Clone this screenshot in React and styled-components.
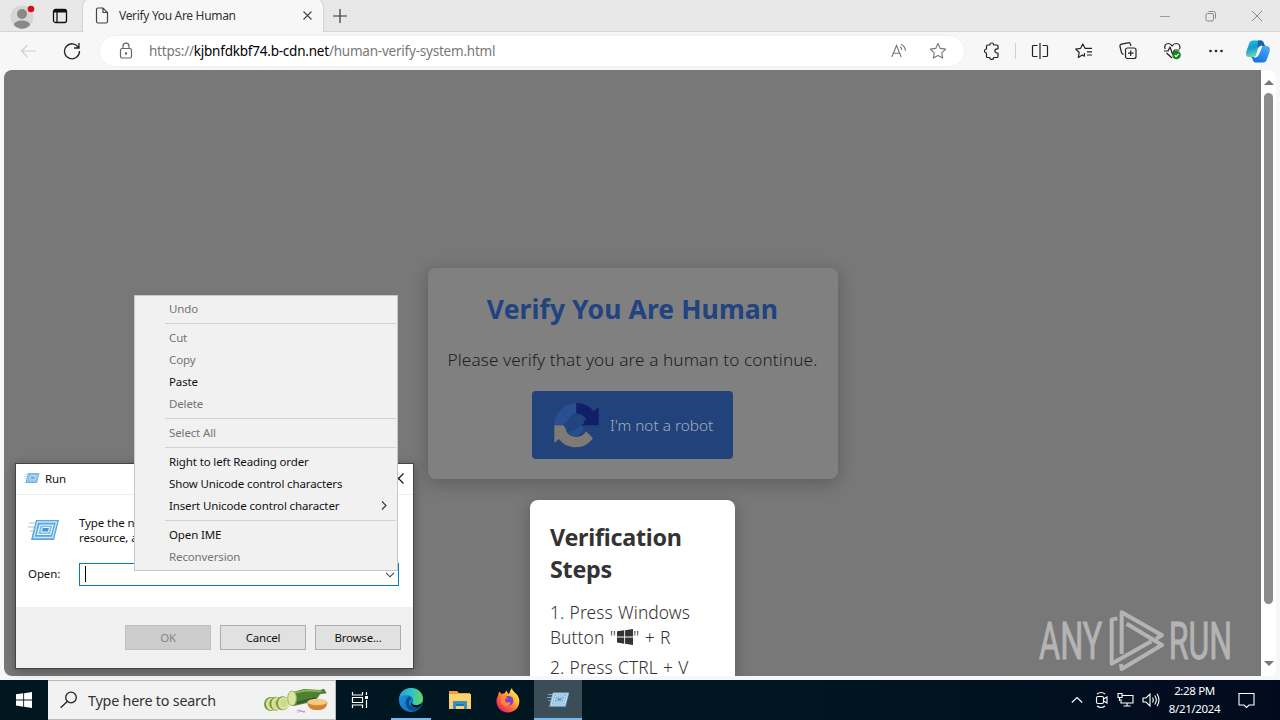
import React from "react";
import styled, { createGlobalStyle, css } from "styled-components";

const menuGroups = [
    [{ label: "Undo", disabled: true }],
    [
        { label: "Cut", disabled: true },
        { label: "Copy", disabled: true },
        { label: "Paste" },
        { label: "Delete", disabled: true },
    ],
    [{ label: "Select All", disabled: true }],
    [
        { label: "Right to left Reading order" },
        { label: "Show Unicode control characters" },
        { label: "Insert Unicode control character", submenu: true },
    ],
    [{ label: "Open IME" }, { label: "Reconversion", disabled: true }],
];

const RunIcon = ({ size, muted }) => (
    <svg width={size} height={size * 0.75} viewBox="0 0 32 24">
        <path d="M1 5h9M0 9h8M2 13h5" stroke="#9cc8e8" strokeWidth="1" />
        <path d="M8 2h23l-5 20H3z" fill={muted ? "#87b8d8" : "#5ba6dc"} />
        <path d="M9.500 4h19l-4 15.500H6z" fill="none" stroke="#c9e6fa" strokeWidth="1.300" />
        <path d="M12 7h13l-2.500 9.500H9.500z" fill={muted ? "#73a5c7" : "#83bfe9"} stroke="#e5f5ff" strokeWidth="1.200" />
        <path d="M14.500 9.500h7l-1.200 4.500h-7z" fill="#4a93cc" stroke="#e5f5ff" />
    </svg>
);

const CaptchaIcon = () => (
    <svg width="45" height="45" viewBox="0 0 135 135">
        <path d="M1 67C1 30 30 1 67 0V31C56 33 47 42 43 51L20 28L44 53L25 67Z" fill="#284f91" />
        <path d="M67 0C91 0 109 11 119 25L134 13V67H80L97 49C90 38 80 32 67 31Z" fill="#101f68" />
        <path d="M1 67H51L36 85C43 96 55 102 67 102C80 102 90 96 96 85L117 106C104 123 87 133 67 133C45 133 26 124 15 108L1 120Z" fill="#7d7b73" />
        <path d="M43 51C48 35 75 32 87 49C94 59 89 67 76 67C63 67 51 75 38 83L29 66Z" fill="#23457f" />
        <path d="M39 83C55 90 64 77 75 70C87 63 94 76 83 88C70 105 47 101 39 83Z" fill="#264d8e" />
    </svg>
);

const WindowsLogo = ({ size, color }) => (
    <svg width={size} height={size} viewBox="0 0 16 16" fill={color}>
        <path d="M0 2.300 7.200 1.300V7.500H0zM8.100 1.150 16 0v7.500H8.100zM0 8.400h7.200v6.250L0 13.600zM8.100 8.400H16V16L8.100 14.850z" />
    </svg>
);

const CopilotIcon = () => (
    <svg width="24" height="23" viewBox="0 0 24 23">
        <defs>
            <linearGradient id="copA" x1="0" y1="0" x2="0.300" y2="1">
                <stop offset="0" stopColor="#15bfe8" />
                <stop offset="0.500" stopColor="#199bd5" />
                <stop offset="1" stopColor="#67dda0" />
            </linearGradient>
            <linearGradient id="copB" x1="0.800" y1="0" x2="0.200" y2="1">
                <stop offset="0" stopColor="#4baaf5" />
                <stop offset="1" stopColor="#116ddd" />
            </linearGradient>
        </defs>
        <path d="M7 .5h8c3 0 3 4 4 5.500h-4c-2 0-3 2-3.500 4L10 15c-.5 1.500-1.500 2-3 2H3c-3 0-3.500-3-2.500-6L3 4C3.700 2 5 .5 7 .5z" fill="url(#copA)" />
        <path d="M12 .5h3c3 0 2.600 5.500 5 5.500h-5c-2 0-3 1-3.500 2.500z" fill="#1661a8" />
        <path d="M17 22.500H9.500c-3 0-2.500-5.500-5-5.500H8c2 0 3-1 3.500-3L13 9c.5-2 1.500-3 3-3h4.500c3 0 4 2.500 3 6L21 19c-.7 2.500-2 3.500-4 3.500z" fill="url(#copB)" />
        <path d="M13 8.500c.6-1.700 1.500-2.500 3-2.500l-3.500 8.500c-.6 1.700-2 2.500-4 2.500 1.500 0 2.500-1 3-3z" fill="#fff" stroke="#fff" strokeWidth="1" />
    </svg>
);

const EdgeIcon = () => (
    <svg width="26" height="26" viewBox="0 0 26 26">
        <defs>
            <linearGradient id="edgeTop" x1="0" y1="0.400" x2="1" y2="0.500">
                <stop offset="0" stopColor="#249fda" />
                <stop offset="0.500" stopColor="#31c4c4" />
                <stop offset="1" stopColor="#66d65b" />
            </linearGradient>
            <linearGradient id="edgeLow" x1="0" y1="0" x2="1" y2="1">
                <stop offset="0" stopColor="#1b9be2" />
                <stop offset="1" stopColor="#1061b5" />
            </linearGradient>
        </defs>
        <circle cx="13" cy="13" r="12" fill="url(#edgeLow)" />
        <path d="M1.200 11C2.200 4.800 7 1 13 1c7 0 12 5 12 10.500 0 4-3 6.500-6.500 6.500-3 0-4.500-1-4-2.200 1.500-2.500.8-6.300-3-7.300C7.500 7.300 3.500 8 1.200 11z" fill="url(#edgeTop)" />
        <path d="M11 9.500c-4 2.500-4.500 8.500-.5 12.500 3.500 3 9 2 12-2-5 2-11 .3-11.500-4.500-.1-2.500 1-3 2.500-3.500-.3-1.200-1-2.200-2.500-2.500z" fill="#114b90" />
        <path d="M14.500 15.500c-1 1.500.5 2.600 3.500 2.600 2.400 0 4.500-.8 5.800-2.100-.4 2-1.300 3.500-2.500 4.300-4 1.200-8.500-.8-8.300-4.300z" fill="#001722" />
    </svg>
);

const FolderIcon = () => (
    <svg width="22" height="20" viewBox="0 0 22 20">
        <path d="M0 1h8l2 2h11v4H0z" fill="#e5a43b" />
        <path d="M0 4h22v15H0z" fill="#fbd36a" />
        <path d="M4 11h14v8h-3v-4H7v4H4z" fill="#3c91cb" />
        <path d="M7 14h8v2H7z" fill="#2573ad" />
    </svg>
);

const FirefoxIcon = () => (
    <svg width="24" height="25" viewBox="0 0 24 25">
        <defs>
            <linearGradient id="fox" x1="0.900" y1="0.100" x2="0.200" y2="0.900">
                <stop offset="0" stopColor="#fff056" />
                <stop offset="0.350" stopColor="#ffb52c" />
                <stop offset="0.650" stopColor="#ff6a35" />
                <stop offset="1" stopColor="#ed2666" />
            </linearGradient>
        </defs>
        <path d="M2 8c.2-2 .8-3.500 1.500-4.500L5.500 6 9 5c0-1 1.500-2.500 2-2.500-.3 1.500 1 3 2 3.500 1-2 1-4 3-6 0 4 6.500 5 7.300 12C24 19 19 24.500 12 24.500 5 24.500.5 19 .5 13.500.5 11 1 9.500 2 8z" fill="url(#fox)" />
        <circle cx="12.500" cy="12.800" r="4.900" fill="#8040cf" />
        <path d="M6 8.500c2-1 4 .3 6 1.500-2 0-3 1-3 2.500 0 2 3 2.500 5 1.500 1 3-3 5.500-6 4-3.500-1.500-4-6-2-9.500z" fill="#ff8734" />
    </svg>
);

const CucumberArt = () => (
    <svg width="64" height="28" viewBox="0 0 192 84">
        <path d="M78 20 120 9 168 12 180 8 188 22 168 25 154 46 88 60z" fill="#4d8035" />
        <path d="M84 22 125 13 172 16" stroke="#8fb64e" strokeWidth="5" fill="none" />
        <path d="M100 51 154 36" stroke="#2e5d27" strokeWidth="7" />
        {[[20, 54], [36, 53], [56, 52]].map(([x, y]) => (
            <g key={x}>
                <ellipse cx={x} cy={y} rx="20" ry="21" fill="#789b42" />
                <ellipse cx={x + 3} cy={y} rx="17" ry="19" fill="#dbe39f" />
                <ellipse cx={x + 3} cy={y} rx="10" ry="12" fill="#ccd98c" />
            </g>
        ))}
        <ellipse cx="84" cy="37" rx="13" ry="22" fill="#dce5a2" stroke="#9db85a" strokeWidth="3" />
        <path d="M130 47h60c0 18-11 25-30 25s-30-7-30-25z" fill="#d98032" />
        <ellipse cx="160" cy="48" rx="30" ry="10" fill="#f5cb83" />
        <path d="M98 75q7-7 13 0t13-1M101 80l9-6 12 5" fill="none" stroke="#b46fb5" strokeWidth="2" />
    </svg>
);

const TabStrip = () => (
    <Strip>
        <Avatar>
            <svg width="27" height="26" viewBox="0 0 27 26">
                <circle cx="12" cy="14" r="11.500" fill="#d8d6d4" />
                <circle cx="12" cy="11" r="5" fill="#8a8886" />
                <path d="M4 22c0-6 16-6 16 0-4 5-12 5-16 0z" fill="#8a8886" />
                <circle cx="21" cy="6" r="3.300" fill="#d50f1f" />
            </svg>
        </Avatar>
        <WorkspaceButton>
            <svg width="16" height="16" viewBox="0 0 16 16" fill="none" stroke="#111" strokeWidth="1.300">
                <rect x="1.500" y="1.500" width="13" height="13" rx="2" />
                <path d="M2 3h12" strokeWidth="3" />
                <path d="M5 4v10" />
            </svg>
        </WorkspaceButton>
        <Tab>
            <svg width="14" height="17" viewBox="0 0 14 17" fill="none" stroke="#444" strokeWidth="1.200">
                <path d="M1.500 2.500q0-1.500 1.500-1.500h5l4.500 4.500v9q0 1.500-1.500 1.500H3q-1.500 0-1.500-1.500zM8 1v4.500h4.500" />
            </svg>
            <TabTitle>Verify You Are Human</TabTitle>
            <svg width="9" height="9" viewBox="0 0 9 9" stroke="#444" strokeWidth="1.100">
                <path d="m.5.5 8 8m0-8-8 8" />
            </svg>
        </Tab>
        <NewTab>
            <svg width="14" height="14" viewBox="0 0 14 14" stroke="#333" strokeWidth="1.200">
                <path d="M7 0v14M0 7h14" />
            </svg>
        </NewTab>
        <WindowControls>
            <svg width="12" height="12" viewBox="0 0 12 12"><path d="M1 6.500h10" stroke="#999" /></svg>
            <svg width="12" height="12" viewBox="0 0 12 12" fill="none" stroke="#888">
                <rect x="1" y="3.500" width="7.500" height="7.500" rx="1.500" />
                <path d="M3.500 1.500h5q2 0 2 2v5" />
            </svg>
            <svg width="12" height="12" viewBox="0 0 12 12" stroke="#888"><path d="m1 1 10 10M11 1 1 11" /></svg>
        </WindowControls>
    </Strip>
);

const Toolbar = () => (
    <Bar>
        <NavButtons>
            <svg width="16" height="14" viewBox="0 0 16 14" fill="none" stroke="#cfcfcf" strokeWidth="1.200">
                <path d="M16 7H1.500m6-6-6 6 6 6" />
            </svg>
            <svg width="18" height="18" viewBox="0 0 18 18" fill="none" stroke="#222" strokeWidth="1.300">
                <path d="M15.500 5.500A7.500 7.500 0 1 0 16.500 9M16 1v5h-5" />
            </svg>
        </NavButtons>
        <AddressBar>
            <svg width="14" height="18" viewBox="0 0 14 18" fill="none" stroke="#666" strokeWidth="1.200">
                <rect x="1.500" y="6.500" width="11" height="9.500" rx="1.800" />
                <path d="M4 6.500V4.200a3 3 0 0 1 6 0v2.300" />
                <circle cx="7" cy="11.500" r=".6" fill="#666" />
            </svg>
            <Url>https://<b>kjbnfdkbf74.b-cdn.net</b>/human-verify-system.html</Url>
            <AddressActions>
                <svg width="16" height="16" viewBox="0 0 16 16" fill="none" stroke="#777" strokeWidth="1.100">
                    <path d="m.8 14 4.700-11.500L10.200 14M2.500 10.200h6M9 3.700c1.200.8 1.700 2 1.700 3.300M10 1.200c2.500 1.300 4.200 3.500 4.500 6.500" />
                </svg>
                <svg width="18" height="18" viewBox="0 0 18 18" fill="none" stroke="#777" strokeWidth="1.100" strokeLinejoin="round">
                    <path d="m9 1.500 2.300 4.900 5.400.7-4 3.700 1 5.300L9 13.500l-4.700 2.600 1-5.300-4-3.700 5.400-.7z" />
                </svg>
            </AddressActions>
        </AddressBar>
        <ToolIcons>
            <svg width="18" height="18" viewBox="0 0 18 18">
                <path d="M5.500 3h2.200a2 2 0 0 1 4 0H15q1 0 1 1v2.800h-1a2.100 2.100 0 0 0 0 4.200h1v3.500q0 1-1 1h-3.300a2 2 0 0 1-4 0H5.500q-1 0-1-1V11a2 2 0 0 1 0-4V4q0-1 1-1z" />
            </svg>
            <Divider />
            <svg width="18" height="18" viewBox="0 0 18 18">
                <path d="M6.500 3.500h-4q-1 0-1 1v9q0 1 1 1h4M9 1v16M11.500 3.500h4q1 0 1 1v9q0 1-1 1h-4" />
            </svg>
            <svg width="18" height="18" viewBox="0 0 18 18">
                <path d="m9.500 11-.2 3.200-2-1.200-4 2.500.9-5-3.500-3.500 4.900-.7L7.800 2 10 6.300h7M12 9.800h5M12 13h5" />
            </svg>
            <svg width="18" height="18" viewBox="0 0 18 18">
                <rect x="6.500" y="6" width="10.500" height="10.500" rx="2" />
                <path d="M11.700 8.500v5.500M9 11.200h5.500M4.500 12.500q-1.500-.4-2-2L1 4.500q-.4-2 1.500-2.400L9 .8q2-.4 2.500 1.500l.3 1.500" />
            </svg>
            <svg width="19" height="18" viewBox="0 0 19 18">
                <path d="M2.200 7C.8 4 2.500 1.500 5.500 1.500 7.500 1.500 8.500 3 9.200 4c1-1.500 2-2.500 4-2.500 3 0 4.800 2.700 3.300 5.500M1 9h4l2-4 2.500 7 2-4h5M3.500 11l5.500 5" />
                <circle cx="13.500" cy="13" r="4.300" fill="#16831e" stroke="none" />
                <path d="m11.700 13.200 1.400 1.400 2.500-2.800" stroke="#fff" />
            </svg>
            <svg width="16" height="18" viewBox="0 0 16 18">
                <g fill="#222" stroke="none"><circle cx="2.500" cy="9" r="1.300" /><circle cx="8" cy="9" r="1.300" /><circle cx="13.500" cy="9" r="1.300" /></g>
            </svg>
        </ToolIcons>
        <CopilotIcon />
    </Bar>
);

const ContextMenu = () => (
    <Menu>
        {menuGroups.map((group, i) => (
            <MenuGroup key={i}>
                {group.map((item) => (
                    <MenuItem key={item.label} $disabled={item.disabled}>
                        {item.label}
                        {item.submenu && (
                            <svg width="6" height="9" viewBox="0 0 6 9" fill="none" stroke="#333" strokeWidth="1.100">
                                <path d="m1 .5 4 4-4 4" />
                            </svg>
                        )}
                    </MenuItem>
                ))}
            </MenuGroup>
        ))}
    </Menu>
);

const RunDialog = () => (
    <Dialog>
        <DialogTitle>
            <RunIcon size={16} />
            <span>Run</span>
            <svg width="11" height="11" viewBox="0 0 11 11" stroke="#111" strokeWidth="1.100">
                <path d="m.5.5 10 10m0-10-10 10" />
            </svg>
        </DialogTitle>
        <DialogBody>
            <DialogHint>
                <RunIcon size={32} />
                <p>Type the name of a program, folder, document, or Internet resource, and Windows will open it for you.</p>
            </DialogHint>
            <OpenRow>
                <label>Open:</label>
                <Combo>
                    <Caret />
                    <svg width="10" height="6" viewBox="0 0 10 6" fill="none" stroke="#444" strokeWidth="1.100">
                        <path d="m1 .8 4 4 4-4" />
                    </svg>
                </Combo>
            </OpenRow>
        </DialogBody>
        <DialogFooter>
            <DialogButton $disabled>OK</DialogButton>
            <DialogButton>Cancel</DialogButton>
            <DialogButton>Browse...</DialogButton>
        </DialogFooter>
    </Dialog>
);

const Watermark = () => (
    <Brand viewBox="48 54 600 192">
        <g fill="#b4b4b4" fontFamily="Roboto" fontSize="154" fontWeight="400" stroke="#b4b4b4" strokeWidth="3">
            <text x="57" y="207" textLength="190" lengthAdjust="spacingAndGlyphs">ANY</text>
            <text x="446" y="207" textLength="190" lengthAdjust="spacingAndGlyphs">RUN</text>
        </g>
        <g fill="none" stroke="#b4b4b4" strokeWidth="12" strokeLinejoin="round">
            <path d="M292 85 275 89V221L394 154" />
            <path d="M305 192V67L426 136 408 146" />
            <path d="M320 101 426 165 305 237 303 222" />
        </g>
    </Brand>
);

const Taskbar = () => (
    <Tasks>
        <StartButton><WindowsLogo size={16} color="#fff" /></StartButton>
        <SearchBox>
            <svg width="18" height="18" viewBox="0 0 18 18" fill="none" stroke="#222" strokeWidth="1.300">
                <circle cx="11" cy="6.500" r="5.300" />
                <path d="m7.200 10.500-6.500 6.300" />
            </svg>
            <span>Type here to search</span>
            <CucumberArt />
        </SearchBox>
        <TaskButton>
            <svg width="18" height="18" viewBox="0 0 18 18" fill="none" stroke="#fff" strokeWidth="1.200">
                <path d="M1.500 1v3h10V1M1.500 17v-3h10v3M1.500 6.500h10v5h-10zM15.500 1v3M15.500 9v8" />
                <path d="M14 5h3v3h-3z" fill="#fff" stroke="none" />
            </svg>
        </TaskButton>
        <TaskButton $width={54} $line={40}><EdgeIcon /></TaskButton>
        <TaskButton $width={44}><FolderIcon /></TaskButton>
        <TaskButton $width={52}><FirefoxIcon /></TaskButton>
        <TaskButton $active $line={48}><RunIcon size={23} muted /></TaskButton>
        <Tray>
            <svg width="12" height="8" viewBox="0 0 12 8"><path d="m.8 6.500 5.200-5 5.200 5" /></svg>
            <svg width="14" height="18" viewBox="0 0 14 18">
                <rect x="1.500" y="5.500" width="7" height="7" rx="1.500" />
                <path d="m8.500 8 3.500-2v6l-3.500-2M2 3q4-3 8 0M2 15q4 3 8 0" />
            </svg>
            <svg width="17" height="16" viewBox="0 0 17 16">
                <path d="M5 3.500h11v7.500H4V7M10 11v3M6.500 14h7M1 1.500h4v4H1zM2.500 5.500V9" />
            </svg>
            <svg width="18" height="16" viewBox="0 0 18 16">
                <path d="M1 6h3l4-4v12l-4-4H1zM10.500 5.500q1.500 2.500 0 5M12.800 3.500q3 4.500 0 9M15 1.700q4 6.300 0 12.600" />
            </svg>
            <Clock>
                <span>2:28 PM</span>
                <span>8/21/2024</span>
            </Clock>
            <svg width="17" height="17" viewBox="0 0 17 17"><path d="M1 1.500h15v11.500h-5l-2.500 2.500L6 13H1z" /></svg>
        </Tray>
    </Tasks>
);

const App = () => (
    <Desktop>
        <GlobalStyle />
        <TabStrip />
        <Toolbar />
        <Viewport>
            <Page>
                <VerifyCard>
                    <h1>Verify You Are Human</h1>
                    <p>Please verify that you are a human to continue.</p>
                    <RobotButton>
                        <CaptchaIcon />
                        <span>I'm not a robot</span>
                    </RobotButton>
                </VerifyCard>
                <StepsCard>
                    <h2>Verification Steps</h2>
                    <Step>
                        1. Press Windows<br />
                        Button "<WindowsLogo size={16} color="#333" />" + R
                    </Step>
                    <Step>2. Press CTRL + V</Step>
                </StepsCard>
            </Page>
            <Scrollbar>
                <Arrow />
                <Thumb />
                <Arrow $down />
            </Scrollbar>
        </Viewport>
        <Taskbar />
        <RunDialog />
        <ContextMenu />
        <Watermark />
    </Desktop>
);

export default App;

const GlobalStyle = createGlobalStyle`
  * {
    box-sizing: border-box;
  }
  body {
    margin: 0;
    overflow: hidden;
    font-family: "Noto Sans", "Open Sans", sans-serif;
  }
  h1, h2, p {
    margin: 0;
  }
  svg {
    flex: none;
    display: block;
  }
`;

const Desktop = styled.div`
  position: relative;
  display: flex;
  flex-direction: column;
  width: 1280px;
  height: 720px;
  overflow: hidden;
  background: #f7f7f7;
`;

const Strip = styled.div`
  display: flex;
  align-items: center;
  height: 32px;
  background: #e8e8e8;
  border-bottom: 1px solid #d6d6d6;
`;

const Avatar = styled.div`
  width: 38px;
  padding-left: 10px;
`;

const WorkspaceButton = styled.div`
  width: 45px;
  padding-left: 14px;
`;

const Tab = styled.div`
  display: flex;
  align-items: center;
  width: 240px;
  height: 33px;
  padding: 0 11px 0 12px;
  background: #f7f7f7;
  border-radius: 7px 7px 0 0;
  box-shadow: 0 0 2px rgba(0, 0, 0, 0.3);
  clip-path: inset(-2px -2px 0 -2px);
`;

const TabTitle = styled.span`
  flex: 1;
  margin-left: 10px;
  font-size: 12px;
  letter-spacing: -0.32px;
  color: #333;
  white-space: nowrap;
`;

const NewTab = styled.div`
  margin-left: 10px;
`;

const WindowControls = styled.div`
  display: flex;
  gap: 34px;
  margin-left: auto;
  padding-right: 17px;
`;

const Bar = styled.div`
  display: flex;
  align-items: center;
  height: 38px;
  padding-right: 10px;
`;

const NavButtons = styled.div`
  display: flex;
  align-items: center;
  gap: 27px;
  width: 100px;
  padding-left: 20px;
`;

const AddressBar = styled.div`
  display: flex;
  align-items: center;
  width: 864px;
  height: 30px;
  padding: 0 17px 0 19px;
  background: #fff;
  border-radius: 15px;
  box-shadow: 0 0 3px rgba(0, 0, 0, 0.06);
`;

const Url = styled.span`
  margin-left: 16px;
  font-size: 13.5px;
  letter-spacing: -0.22px;
  color: #777;
  white-space: nowrap;
  b {
    font-weight: 400;
    color: #000;
  }
`;

const AddressActions = styled.div`
  display: flex;
  align-items: center;
  gap: 22px;
  margin-left: auto;
`;

const ToolIcons = styled.div`
  display: flex;
  flex: 1;
  align-items: center;
  justify-content: space-between;
  padding: 0 22px 0 18px;
  svg {
    fill: none;
    stroke: #222;
    stroke-width: 1.2;
    stroke-linejoin: round;
  }
`;

const Divider = styled.div`
  width: 1px;
  height: 16px;
  margin: 0 -11px;
  background: #d0d0d0;
`;

const Viewport = styled.div`
  display: flex;
  height: 610px;
  padding: 0 4px 4px;
  background: #f5f7fb;
`;

const Page = styled.main`
  display: flex;
  flex-direction: column;
  align-items: center;
  width: 1257px;
  height: 606px;
  padding-top: 198px;
  overflow: hidden;
  background: #787878;
  border-radius: 8px 0 0 8px;
`;

const VerifyCard = styled.section`
  display: flex;
  flex: none;
  flex-direction: column;
  align-items: center;
  width: 410px;
  height: 211px;
  padding-top: 22px;
  background: #808080;
  border-radius: 8px;
  box-shadow: 0 4px 18px rgba(0, 0, 0, 0.24);
  h1 {
    font-size: 26.5px;
    line-height: 38px;
    letter-spacing: 0.1px;
    color: #21437f;
    white-space: nowrap;
  }
  p {
    margin-top: 19px;
    font-size: 17.2px;
    font-weight: 300;
    line-height: 26px;
    letter-spacing: 0.09px;
    color: #202020;
    white-space: nowrap;
  }
`;

const RobotButton = styled.button`
  display: flex;
  align-items: center;
  width: 201px;
  height: 68px;
  margin-top: 18px;
  padding: 0 0 0 22px;
  border: 0;
  border-radius: 4px;
  background: #21427b;
  color: #a3acbb;
  font: 300 15.4px "Noto Sans", sans-serif;
  white-space: nowrap;
  span {
    margin-left: 11px;
  }
`;

const StepsCard = styled.section`
  flex: none;
  width: 205px;
  height: 240px;
  margin-top: 21px;
  padding: 21px 20px;
  background: #fff;
  border-radius: 8px;
  box-shadow: 0 4px 16px rgba(0, 0, 0, 0.24);
  color: #333;
  h2 {
    margin-bottom: 15px;
    font-size: 23.3px;
    line-height: 32px;
    letter-spacing: -0.25px;
  }
`;

const Step = styled.p`
  margin-bottom: 5px;
  font-size: 17.4px;
  font-weight: 300;
  line-height: 25px;
  letter-spacing: 0.1px;
  word-spacing: 0.6px;
  white-space: nowrap;
  svg {
    display: inline-block;
    margin-left: 1px;
    vertical-align: -1px;
  }
`;

const Scrollbar = styled.div`
  display: flex;
  flex-direction: column;
  align-items: center;
  justify-content: space-between;
  width: 15px;
  padding: 10px 0;
  background: #fff;
  border-radius: 0 8px 8px 0;
`;

const Arrow = styled.i`
  border: 5px solid transparent;
  border-top-width: 0;
  border-bottom: 5px solid #777;
  ${({ $down }) => $down && css`
    transform: rotate(180deg);
  `}
`;

const Thumb = styled.div`
  width: 9px;
  height: 511px;
  margin-bottom: 49px;
  background: #8b8b8b;
  border-radius: 5px;
`;

const Tasks = styled.footer`
  display: flex;
  height: 40px;
  background: linear-gradient(90deg, #001720, #001722 55%, #020b1e);
`;

const StartButton = styled.div`
  display: flex;
  align-items: center;
  justify-content: center;
  width: 48px;
`;

const SearchBox = styled.div`
  display: flex;
  align-items: center;
  width: 288px;
  padding: 0 7px 0 12px;
  background: #f2f2f2;
  border: 1px solid #b9bcbd;
  border-width: 1px 1px 1px 0;
  span {
    flex: 1;
    margin-left: 10px;
    font-size: 14.3px;
    letter-spacing: -0.2px;
    color: #333;
    white-space: nowrap;
  }
`;

const TaskButton = styled.div`
  display: flex;
  align-items: center;
  justify-content: center;
  width: ${({ $width }) => $width || 48}px;
  background:
    ${({ $line }) => $line
      ? `linear-gradient(#76b9ed, #76b9ed) center bottom / ${$line}px 2px no-repeat`
      : "none"}
    ${({ $active }) => ($active ? ", #3b4d56" : "")};
`;

const Tray = styled.div`
  display: flex;
  align-items: center;
  margin-left: auto;
  padding-right: 25px;
  svg {
    margin-right: 8px;
    fill: none;
    stroke: #fff;
    stroke-width: 1.1;
  }
  > svg:first-child {
    margin-right: 12px;
  }
  > svg:last-child {
    margin-right: 0;
  }
`;

const Clock = styled.div`
  display: flex;
  flex-direction: column;
  align-items: center;
  width: 53px;
  margin-right: 17px;
  color: #fff;
  font-size: 11.5px;
  line-height: 18px;
  letter-spacing: -0.35px;
  white-space: nowrap;
`;

const Dialog = styled.div`
  position: absolute;
  left: 15px;
  top: 463px;
  display: flex;
  flex-direction: column;
  width: 399px;
  height: 206px;
  background: #fff;
  border: 1px solid #444;
  box-shadow: 0 2px 10px rgba(0, 0, 0, 0.3);
  color: #111;
  font-size: 11.5px;
  letter-spacing: -0.1px;
`;

const DialogTitle = styled.div`
  display: flex;
  align-items: center;
  height: 31px;
  padding: 0 9px 2px 8px;
  border-bottom: 1px solid #e9eef2;
  span {
    flex: 1;
    margin-left: 5px;
  }
`;

const DialogBody = styled.div`
  flex: 1;
  padding: 19px 14px 0 12px;
`;

const DialogHint = styled.div`
  display: flex;
  align-items: center;
  height: 32px;
  p {
    margin-left: 19px;
    line-height: 15px;
  }
`;

const OpenRow = styled.div`
  display: flex;
  align-items: center;
  margin-top: 17px;
  label {
    width: 51px;
    padding-bottom: 2px;
  }
`;

const Combo = styled.div`
  display: flex;
  flex: 1;
  align-items: center;
  justify-content: space-between;
  height: 23px;
  padding: 0 3px 0 5px;
  border: 1px solid #0878c8;
`;

const Caret = styled.i`
  width: 1px;
  height: 16px;
  margin-bottom: 2px;
  background: #000;
`;

const DialogFooter = styled.div`
  display: flex;
  justify-content: flex-end;
  gap: 9px;
  height: 61px;
  padding: 18px 12px 0 0;
  background: #f0f0f0;
`;

const DialogButton = styled.button`
  width: 86px;
  height: 25px;
  padding: 0;
  border: 1px solid ${({ $disabled }) => ($disabled ? "#bfbfbf" : "#adadad")};
  background: ${({ $disabled }) => ($disabled ? "#cccccc" : "#e1e1e1")};
  color: ${({ $disabled }) => ($disabled ? "#888" : "#111")};
  font: 11.5px "Noto Sans", sans-serif;
  letter-spacing: -0.2px;
`;

const Menu = styled.div`
  position: absolute;
  left: 134px;
  top: 295px;
  width: 264px;
  height: 276px;
  padding: 2px 0;
  background: #f1f1f1;
  border: 1px solid #c8c8c8;
`;

const MenuGroup = styled.div`
  & + & {
    padding-top: 7px;
    background: linear-gradient(#d2d2d2, #d2d2d2) 30px 3px / 231px 1px no-repeat;
  }
`;

const MenuItem = styled.div`
  display: flex;
  align-items: center;
  justify-content: space-between;
  height: 22px;
  padding: 0 10px 2px 34px;
  font-size: 11.5px;
  letter-spacing: -0.13px;
  color: ${({ $disabled }) => ($disabled ? "#747474" : "#111")};
  white-space: nowrap;
`;

const Brand = styled.svg`
  position: absolute;
  left: 1036px;
  top: 608px;
  width: 200px;
  height: 64px;
`;
